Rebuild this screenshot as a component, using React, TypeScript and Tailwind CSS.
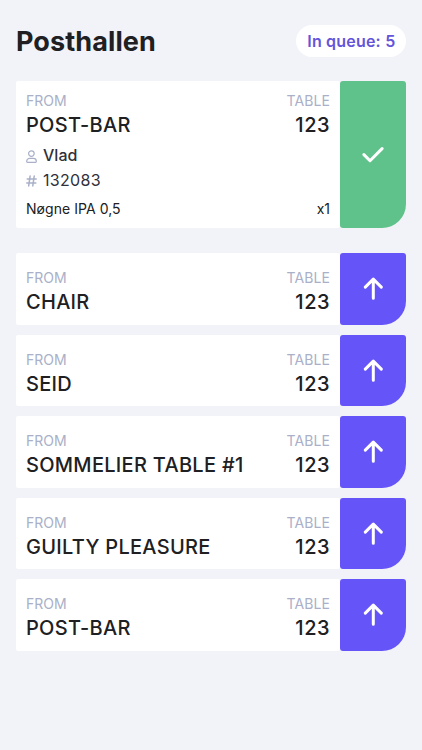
import React from 'react';

const CURRENT_ORDER = {
    from: 'POST-BAR',
    table: 123,
    customer: 'Vlad',
    number: '132083',
    items: [{ name: 'Nøgne IPA 0,5', count: 1 }],
};

const ORDERS = [
    { id: 1, from: 'CHAIR', table: 123 },
    { id: 2, from: 'SEID', table: 123 },
    { id: 3, from: 'SOMMELIER TABLE #1', table: 123 },
    { id: 4, from: 'GUILTY PLEASURE', table: 123 },
    { id: 5, from: 'POST-BAR', table: 123 },
];

const UserIcon = () => (
    <svg className="mt-0.5" width="11" height="13" viewBox="0 0 11 13" fill="none" stroke="#a9b0c8" strokeWidth="1.2">
        <circle cx="5.4" cy="3.6" r="2.8" />
        <path d="M.7 11.2c0-1.8 1.5-2.8 3-2.8h3.6c1.5 0 3 1 3 2.8v.4c0 .4-.3.7-.7.7H1.4c-.4 0-.7-.3-.7-.7z" />
    </svg>
);

const HashIcon = () => (
    <svg className="mt-0.5" width="11" height="12" viewBox="0 0 11 12" fill="none" stroke="#a9b0c8" strokeWidth="1.5" strokeLinecap="round">
        <path d="M4.1 1.1 2.7 10.9M8.2 1.1 6.8 10.9M1.2 4h9M.8 8h9" />
    </svg>
);

const CheckIcon = () => (
    <svg width="22" height="17" viewBox="0 0 22 17" fill="none" stroke="white" strokeWidth="3" strokeLinecap="round" strokeLinejoin="round">
        <path d="M1.9 8.6 8 14.7 20.1 2.6" />
    </svg>
);

const ArrowIcon = () => (
    <svg width="20" height="23" viewBox="0 0 20 23" fill="none" stroke="white" strokeWidth="3" strokeLinecap="round" strokeLinejoin="round">
        <path d="M10.3 21.3V2.1M2.3 10.1l8-8 8 8" />
    </svg>
);

const OrderHeading = ({ from, table }: { from: string; table: number }) => (
    <div className="flex justify-between">
        <div>
            <p className="text-sm leading-5 text-[#a9b0c8]">FROM</p>
            <p className="text-xl leading-7 font-medium tracking-[0.29px]">{from}</p>
        </div>
        <div className="text-right">
            <p className="text-sm leading-5 tracking-[0.1px] text-[#a9b0c8]">TABLE</p>
            <p className="text-xl leading-7 font-medium tracking-[0.5px]">{table}</p>
        </div>
    </div>
);

const App = () => {
    return (
        <div className="min-h-screen bg-[#f2f3f9] pt-[25px] pr-[15.6px] pl-4 font-[Inter,sans-serif] text-[#202022]">
            <header className="flex h-8 items-center justify-between">
                <h1 className="pt-0.5 text-[27px] leading-8 font-bold tracking-[0.1px]">Posthallen</h1>
                <span className="flex h-8 items-center rounded-full bg-white px-[11px] text-base font-semibold tracking-[0.2px] text-[#6554d9]">
                    In queue: 5
                </span>
            </header>

            {/* Order being served */}
            <section className="mt-[24.4px] flex h-[146.5px]">
                <div className="flex-1 rounded-xs bg-white px-2.5 pt-[9.2px]">
                    <OrderHeading from={CURRENT_ORDER.from} table={CURRENT_ORDER.table} />
                    <div className="mt-1 flex h-[25px] items-center gap-1.5 text-base font-medium text-[#30303a]">
                        <UserIcon />
                        {CURRENT_ORDER.customer}
                    </div>
                    <div className="flex h-[25px] items-center gap-1.5 text-base tracking-[0.3px] text-[#30303a]">
                        <HashIcon />
                        {CURRENT_ORDER.number}
                    </div>
                    {CURRENT_ORDER.items.map((item) => (
                        <div key={item.name} className="mt-1.5 flex justify-between text-sm leading-5">
                            <span className="tracking-[0.05px]">{item.name}</span>
                            <span>x{item.count}</span>
                        </div>
                    ))}
                </div>
                <button className="flex w-[66.4px] items-center justify-center rounded-[3px] rounded-br-3xl bg-[#60c28b]">
                    <CheckIcon />
                </button>
            </section>

            {/* Queue */}
            <div className="mt-[25.2px] flex flex-col gap-2.5">
                {ORDERS.map((order) => (
                    <section key={order.id} className="flex h-[71.5px]">
                        <div className="flex-1 rounded-xs bg-white px-2.5 pt-[15.4px]">
                            <OrderHeading from={order.from} table={order.table} />
                        </div>
                        <button className="flex w-[66.4px] items-center justify-center rounded-[3px] rounded-br-3xl bg-[#6554f7]">
                            <ArrowIcon />
                        </button>
                    </section>
                ))}
            </div>
        </div>
    );
};

export default App;
